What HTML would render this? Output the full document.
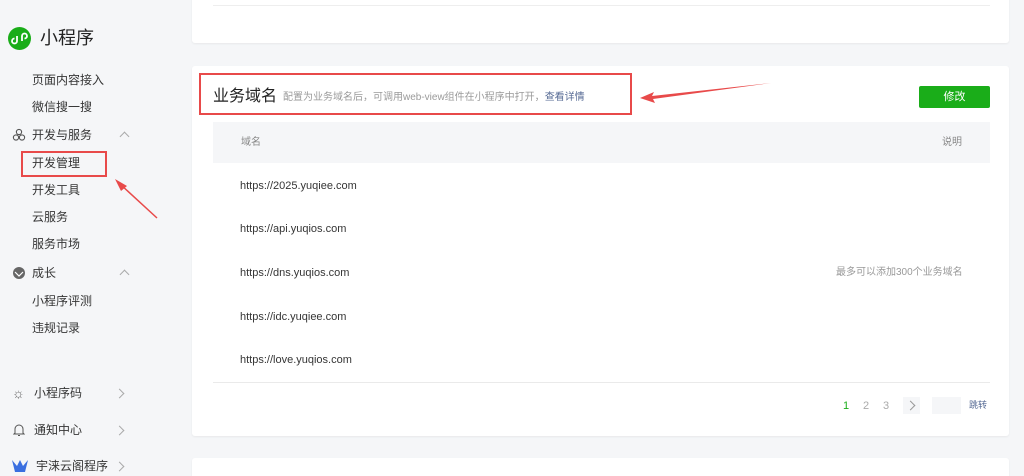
<!DOCTYPE html>
<html><head><meta charset="utf-8"><style>
*{margin:0;padding:0;box-sizing:border-box}
html,body{width:1024px;height:476px;overflow:hidden}
body{background:#f5f6f8;font-family:"Liberation Sans","Noto Sans CJK SC",sans-serif;position:relative;color:#333;line-height:1}
.a{position:absolute}
.nav{font-size:12px;color:#353535;position:absolute;left:32px;line-height:12px}
.card{position:absolute;left:192px;width:817px;background:#fff;border-radius:3px;box-shadow:0 1px 2px rgba(0,0,0,.06)}
.row{position:absolute;left:240px;font-size:11px;color:#353535;line-height:11px}
.chev{position:absolute;width:7px;height:7px;border-left:1px solid #aaa;border-top:1px solid #aaa}
</style></head><body>
<div class="a" style="left:8px;top:27px;width:23px;height:23px;border-radius:50%;background:#1aad19"></div>
<svg class="a" style="left:8px;top:27px" width="23" height="23" viewBox="0 0 23 23"><path d="M9 9v5a2.5 2.5 0 1 1-2.5-2.5M14 14V9a2.5 2.5 0 1 1 2.5 2.5" stroke="#fff" stroke-width="1.8" fill="none"/></svg>
<div class="a" style="left:40px;top:29px;font-size:18px;line-height:18px;color:#222">小程序</div>
<div class="nav" style="top:74px">页面内容接入</div>
<div class="nav" style="top:101px">微信搜一搜</div>
<svg class="a" style="left:12px;top:128px" width="14" height="14" viewBox="0 0 14 14"><g fill="none" stroke="#555" stroke-width="1.1"><circle cx="7" cy="4" r="2.6"/><circle cx="4" cy="9.5" r="2.6"/><circle cx="10" cy="9.5" r="2.6"/></g></svg>
<div class="nav" style="top:129px">开发与服务</div>
<div class="chev" style="left:121px;top:133px;transform:rotate(45deg)"></div>
<div class="nav" style="top:157px">开发管理</div>
<div class="a" style="left:21px;top:151px;width:86px;height:26px;border:2px solid #e84a4a"></div>
<div class="nav" style="top:184px">开发工具</div>
<div class="nav" style="top:211px">云服务</div>
<div class="nav" style="top:238px">服务市场</div>
<svg class="a" style="left:12px;top:266px" width="14" height="14" viewBox="0 0 14 14"><circle cx="7" cy="7" r="6" fill="#666"/><path d="M3 6l4 4 4-4" stroke="#fff" stroke-width="1.2" fill="none"/></svg>
<div class="nav" style="top:267px">成长</div>
<div class="chev" style="left:121px;top:271px;transform:rotate(45deg)"></div>
<div class="nav" style="top:295px">小程序评测</div>
<div class="nav" style="top:322px">违规记录</div>
<div class="a" style="left:12px;top:386px;font-size:14px;line-height:14px;color:#666">☼</div>
<div class="nav" style="top:387px;left:34px">小程序码</div>
<div class="chev" style="left:116px;top:390px;transform:rotate(135deg)"></div>
<svg class="a" style="left:13px;top:423px" width="12" height="14" viewBox="0 0 12 14"><path d="M2 10V6a4 4 0 0 1 8 0v4l1 1H1zM5 12.5h2" stroke="#555" fill="none"/></svg>
<div class="nav" style="top:424px;left:34px">通知中心</div>
<div class="chev" style="left:116px;top:427px;transform:rotate(135deg)"></div>
<svg class="a" style="left:12px;top:460px" width="16" height="12" viewBox="0 0 16 12"><path d="M0 0l5 6 3-6 3 6 5-6-3 12H3z" fill="#3a6fe0"/></svg>
<div class="nav" style="top:460px;left:36px">宇涞云阁程序</div>
<div class="chev" style="left:116px;top:463px;transform:rotate(135deg)"></div>
<svg class="a" style="left:0;top:0" width="200" height="240"><line x1="157" y1="218" x2="120" y2="184" stroke="#e84a4a" stroke-width="1.5"/><polygon points="115,179 127,186 121,191" fill="#e84a4a"/></svg>
<div class="card" style="top:-5px;height:48px"><div class="a" style="left:21px;right:19px;top:10px;border-top:1px solid #eee"></div></div>
<div class="card" style="top:66px;height:370px"></div>
<div class="card" style="top:458px;height:30px"></div>
<div class="a" style="left:213px;top:89px;font-size:16px;line-height:16px;color:#222">业务域名</div>
<div class="a" style="left:283px;top:93px;font-size:10px;line-height:10px;color:#9a9a9a">配置为业务域名后，可调用web-view组件在小程序中打开，<span style="color:#576b95">查看详情</span></div>
<div class="a" style="left:199px;top:73px;width:433px;height:42px;border:2px solid #e84a4a"></div>
<svg class="a" style="left:636px;top:80px" width="140" height="25"><polygon points="4,18 18,12 16,16 135,3 17,19 19,23" fill="#e84a4a"/></svg>
<div class="a" style="left:919px;top:86px;width:71px;height:22px;background:#1aad19;border-radius:2px;color:#fff;font-size:11px;text-align:center;line-height:22px">修改</div>
<div class="a" style="left:213px;top:122px;width:777px;height:41px;background:#f5f6f8"></div>
<div class="a" style="left:241px;top:138px;font-size:10px;line-height:10px;color:#888">域名</div>
<div class="a" style="left:942px;top:138px;font-size:10px;line-height:10px;color:#888">说明</div>
<div class="row" style="top:181px">https://2025.yuqiee.com</div>
<div class="row" style="top:224px">https://api.yuqios.com</div>
<div class="row" style="top:268px">https://dns.yuqios.com</div>
<div class="row" style="top:312px">https://idc.yuqiee.com</div>
<div class="row" style="top:355px">https://love.yuqios.com</div>
<div class="a" style="left:836px;top:268px;font-size:10px;line-height:10px;color:#999">最多可以添加300个业务域名</div>
<div class="a" style="left:213px;right:34px;top:382px;border-top:1px solid #eaeaea"></div>
<div class="a" style="left:843px;top:401px;font-size:11px;line-height:11px;color:#1aad19">1</div>
<div class="a" style="left:863px;top:401px;font-size:11px;line-height:11px;color:#aaa">2</div>
<div class="a" style="left:883px;top:401px;font-size:11px;line-height:11px;color:#aaa">3</div>
<div class="a" style="left:903px;top:397px;width:17px;height:17px;background:#f5f6f8"></div>
<div class="chev" style="left:907px;top:402px;transform:rotate(135deg);border-color:#999"></div>
<div class="a" style="left:932px;top:397px;width:29px;height:17px;background:#f5f6f8"></div>
<div class="a" style="left:969px;top:401px;font-size:9px;line-height:9px;color:#576b95">跳转</div>
</body></html>
